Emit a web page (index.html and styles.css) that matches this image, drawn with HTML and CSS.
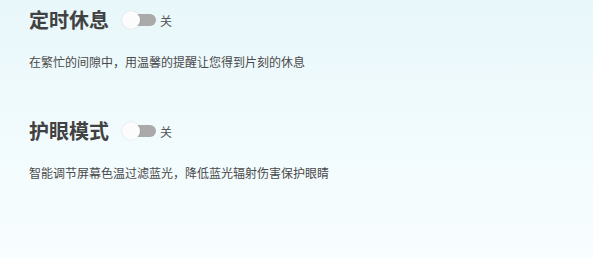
FILE: index.html
```
<!DOCTYPE html>
<html lang="zh-CN">
<head>
    <meta charset="UTF-8">
    <title>设置</title>
    <link rel="stylesheet" href="styles.css">
</head>
<body>
    <div class="settings">
        <div class="option first">
            <div class="option-head">
                <h2>定时休息</h2>
                <span class="switch"><span class="knob"></span></span>
                <span class="state">关</span>
            </div>
            <p>在繁忙的间隙中，用温馨的提醒让您得到片刻的休息</p>
        </div>
        <div class="option">
            <div class="option-head">
                <h2>护眼模式</h2>
                <span class="switch"><span class="knob"></span></span>
                <span class="state">关</span>
            </div>
            <p>智能调节屏幕色温过滤蓝光，降低蓝光辐射伤害保护眼睛</p>
        </div>
    </div>
</body>
</html>
```

FILE: styles.css
```
html, body {
    height: 100%;
}
body {
    margin: 0;
    font-family: "Noto Sans CJK SC", "Noto Sans", sans-serif;
    background: linear-gradient(180deg, #e8f7fa 0%, #f1fbfd 50%, #f8fdff 100%);
    color: #333;
}
.settings {
    padding: 6px 0 0 29px;
}
.option {
    margin-top: 47px;
}
.option.first {
    margin-top: 0;
}
.option-head {
    display: flex;
    align-items: center;
    height: 28px;
}
.option-head h2 {
    margin: 0;
    font-size: 20px;
    font-weight: bold;
    color: #414141;
    line-height: 28px;
}
.switch {
    position: relative;
    width: 30px;
    height: 12px;
    margin-left: 17px;
    border-radius: 6px;
    background-color: #aaaaaa;
}
.knob {
    position: absolute;
    left: -4px;
    top: -3px;
    width: 18px;
    height: 18px;
    border-radius: 50%;
    background-color: #fcfcfc;
    box-shadow: 0 0 2px rgba(0, 0, 0, 0.12);
}
.state {
    margin-left: 4px;
    font-size: 12px;
    color: #555;
}
.option p {
    margin: 20px 0 0;
    font-size: 12px;
    line-height: 16px;
    color: #4a4a4a;
}
```
